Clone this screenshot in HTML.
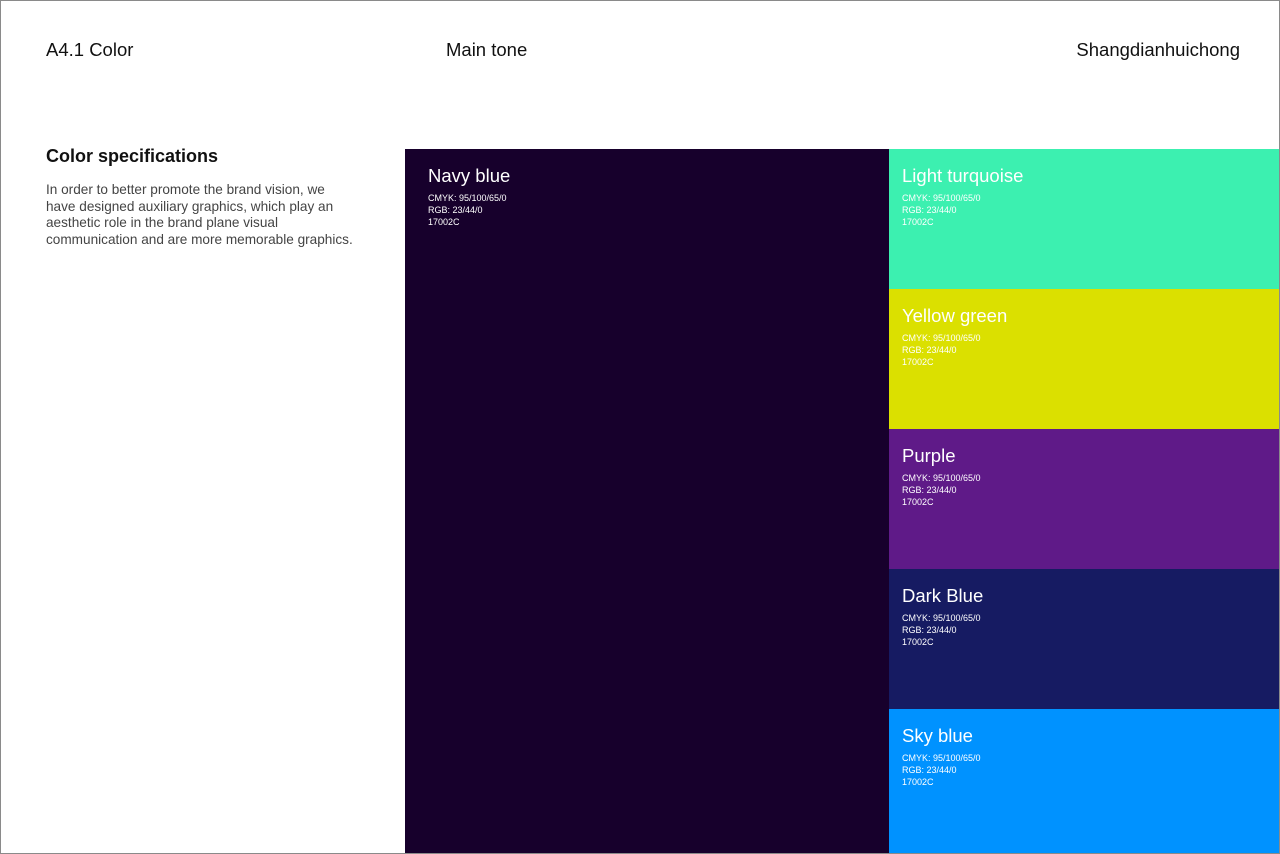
<!DOCTYPE html>
<html><head><meta charset="utf-8"><style>
*{margin:0;padding:0;box-sizing:border-box}
body{width:1280px;height:854px;position:relative;background:#fff;font-family:"Liberation Sans",sans-serif;overflow:hidden}
.frame{position:absolute;left:0;top:0;width:1280px;height:854px;border:1px solid #8a8a8a;z-index:5;pointer-events:none}
.h{position:absolute;top:39px;font-size:18.5px;color:#111}
.b{position:absolute;color:#fff}
.b .t{position:absolute;left:13px;top:16px;font-size:18.5px}
.b .s{position:absolute;left:13px;top:43px;font-size:9px;line-height:12px}
</style></head><body>
<div class="frame"></div>
<div class="h" style="left:46px">A4.1 Color</div>
<div class="h" style="left:446px">Main tone</div>
<div class="h" style="right:40px">Shangdianhuichong</div>
<div style="position:absolute;left:46px;top:146px;font-size:18px;font-weight:bold;color:#111">Color specifications</div>
<div style="position:absolute;left:46px;top:182px;width:340px;font-size:13.6px;line-height:16.5px;color:#444;white-space:nowrap">In order to better promote the brand vision, we<br>have designed auxiliary graphics, which play an<br>aesthetic role in the brand plane visual<br>communication and are more memorable graphics.</div>
<div class="b" style="left:405px;top:149px;width:484px;height:705px;background:#17002c"><div class="t" style="left:23px">Navy blue</div><div class="s" style="left:23px">CMYK: 95/100/65/0<br>RGB: 23/44/0<br>17002C</div></div>
<div class="b" style="left:889px;top:149px;width:391px;height:140px;background:#3cf0b0"><div class="t">Light turquoise</div><div class="s">CMYK: 95/100/65/0<br>RGB: 23/44/0<br>17002C</div></div>
<div class="b" style="left:889px;top:289px;width:391px;height:140px;background:#dbe000"><div class="t">Yellow green</div><div class="s">CMYK: 95/100/65/0<br>RGB: 23/44/0<br>17002C</div></div>
<div class="b" style="left:889px;top:429px;width:391px;height:140px;background:#5f1a88"><div class="t">Purple</div><div class="s">CMYK: 95/100/65/0<br>RGB: 23/44/0<br>17002C</div></div>
<div class="b" style="left:889px;top:569px;width:391px;height:140px;background:#161b62"><div class="t">Dark Blue</div><div class="s">CMYK: 95/100/65/0<br>RGB: 23/44/0<br>17002C</div></div>
<div class="b" style="left:889px;top:709px;width:391px;height:145px;background:#0092ff"><div class="t">Sky blue</div><div class="s">CMYK: 95/100/65/0<br>RGB: 23/44/0<br>17002C</div></div>
</body></html>
